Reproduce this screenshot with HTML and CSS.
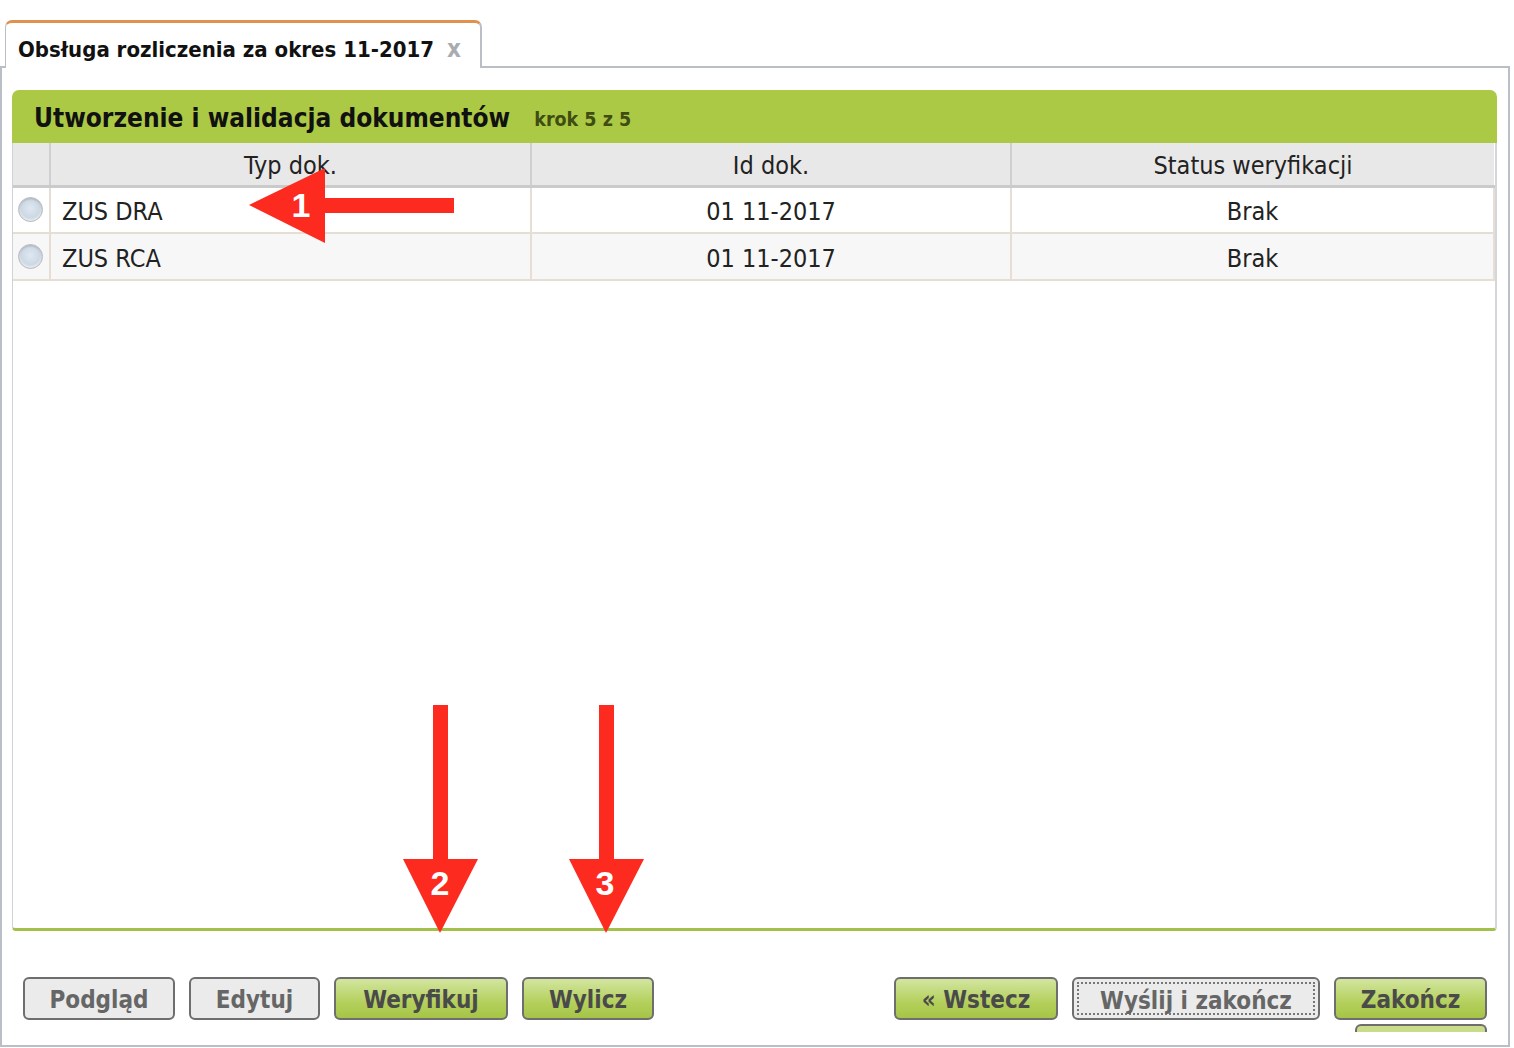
FILE: index.html
```html
<!DOCTYPE html>
<html lang="pl">
<head>
    <meta charset="UTF-8">
    <title>Obsługa rozliczenia</title>
    <link rel="stylesheet" href="styles.css">
</head>
<body>
    <!-- Tab strip -->
    <div class="tabs">
        <div class="tab">
            <span class="tab-title">Obsługa rozliczenia za okres 11-2017</span>
            <span class="tab-close">x</span>
        </div>
    </div>

    <div class="window">
        <div class="panel">
            <div class="panel-header">
                <h2>Utworzenie i walidacja dokumentów</h2>
                <span class="step">krok 5 z 5</span>
            </div>
            <div class="panel-body">
                <table class="grid">
                    <thead>
                        <tr>
                            <th class="col-radio"></th>
                            <th class="col-type">Typ dok.</th>
                            <th class="col-id">Id dok.</th>
                            <th class="col-status">Status weryfikacji</th>
                        </tr>
                    </thead>
                    <tbody>
                        <tr>
                            <td class="col-radio"><span class="radio"></span></td>
                            <td class="left">ZUS DRA</td>
                            <td>01 11-2017</td>
                            <td>Brak</td>
                        </tr>
                        <tr class="alt">
                            <td class="col-radio"><span class="radio"></span></td>
                            <td class="left">ZUS RCA</td>
                            <td>01 11-2017</td>
                            <td>Brak</td>
                        </tr>
                    </tbody>
                </table>
            </div>
        </div>

        <div class="actions">
            <div class="group">
                <button class="btn w-podglad">Podgląd</button>
                <button class="btn w-edytuj">Edytuj</button>
                <button class="btn green w-weryfikuj">Weryfikuj</button>
                <button class="btn green w-wylicz">Wylicz</button>
            </div>
            <div class="group">
                <button class="btn green w-wstecz">&laquo; Wstecz</button>
                <button class="btn focused w-wyslij"><span>Wyślij i zakończ</span></button>
                <div class="stack">
                    <button class="btn green w-zakoncz">Zakończ</button>
                    <div class="btn-shadow"></div>
                </div>
            </div>
        </div>
    </div>

    <!-- Annotation arrows drawn over the screenshot -->
    <svg class="annotations" width="1514" height="1048" viewBox="0 0 1514 1048">
        <g fill="#fc2a1f">
            <rect x="318" y="198" width="136" height="15"/>
            <polygon points="249,205 325,168 325,243"/>
            <rect x="433" y="705" width="15" height="160"/>
            <polygon points="403,859 478,859 440,933"/>
            <rect x="599" y="705" width="15" height="160"/>
            <polygon points="569,859 644,859 606,933"/>
        </g>
        <g class="num" fill="#fff">
            <text x="301" y="217">1</text>
            <text x="440" y="895">2</text>
            <text x="605" y="895">3</text>
        </g>
    </svg>
</body>
</html>
```

FILE: styles.css
```css
* {
    margin: 0;
    padding: 0;
    box-sizing: border-box;
}

body {
    font-family: "DejaVu Sans Condensed", "DejaVu Sans", sans-serif;
    background: #fff;
    color: #222;
    width: 1514px;
    height: 1048px;
    position: relative;
    overflow: hidden;
}

/* Tabs */
.tabs {
    height: 67px;
    padding: 20px 0 0 5px;
    display: flex;
    position: relative;
    z-index: 2;
}

.tab {
    width: 477px;
    height: 48px;
    background: #fff;
    border-top: 3px solid #e0914f;
    border-left: 1px solid #b9bec7;
    border-right: 2px solid #b9bec7;
    border-radius: 7px 7px 0 0;
    display: flex;
    align-items: center;
    padding: 7px 0 0 12px;
}

.tab-title {
    font-weight: bold;
    font-size: 22px;
    color: #111;
}

.tab-close {
    margin-left: 13px;
    font-weight: bold;
    font-size: 24px;
    color: #a8acb0;
}

/* Window */
.window {
    width: 1510px;
    height: 981px;
    border: 2px solid #b9bec7;
    margin-top: -1px;
    padding: 22px 0 0 10px;
}

.panel {
    width: 1485px;
    height: 841px;
    display: flex;
    flex-direction: column;
}

.panel-header {
    height: 53px;
    background: #abc945;
    border-radius: 7px 7px 0 0;
    display: flex;
    align-items: center;
    padding: 2px 0 0 22px;
}

.panel-header h2 {
    font-size: 26px;
    font-weight: bold;
    color: #111;
}

.step {
    margin-left: 24px;
    padding-top: 4px;
    font-size: 19.5px;
    font-weight: bold;
    color: #3f4d12;
}

.panel-body {
    flex: 1;
    background: #fff;
    border-left: 1px solid #cfd2d6;
    border-right: 2px solid #d4d6d9;
    border-bottom: 3px solid #a3c14a;
    border-radius: 0 0 4px 4px;
}

/* Grid */
.grid {
    width: 1482px;
    border-collapse: collapse;
    font-size: 25px;
}

.grid th {
    height: 43px;
    background: #e8e8e8;
    font-weight: normal;
    border-left: 2px solid #cfcfcf;
    border-bottom: 3px solid #cacaca;
    text-align: center;
    padding-top: 3px;
}

.grid th.col-radio {
    border-left: none;
}

.col-radio {
    width: 37px;
}

.col-type {
    width: 481px;
}

.col-id {
    width: 480px;
}

.grid td {
    height: 47px;
    border: 2px solid #e6ded4;
    border-top: none;
    text-align: center;
    padding-top: 3px;
}

.grid td.col-radio {
    border-left: none;
    text-align: left;
    padding: 0 0 0 5px;
}

.grid td.left {
    text-align: left;
    padding-left: 11px;
}

.grid tr.alt td {
    background: #f7f7f7;
}

.radio {
    display: block;
    width: 25px;
    height: 25px;
    border-radius: 50%;
    border: 1px solid #b9bcc0;
    background: radial-gradient(circle at 50% 45%, #dfe8f2 0, #ccd8e4 55%, #eef0f2 75%);
    box-shadow: inset 0 1px 2px rgba(0, 0, 0, 0.2);
}

/* Buttons */
.actions {
    display: flex;
    justify-content: space-between;
    padding: 46px 21px 0 11px;
}

.group {
    display: flex;
    gap: 14px;
    align-items: flex-start;
}

.btn {
    height: 43px;
    padding: 3px 0 0;
    font-family: "DejaVu Sans Condensed", "DejaVu Sans", sans-serif;
    font-size: 24px;
    font-weight: bold;
    white-space: nowrap;
    color: #666;
    background: #ebebeb;
    border: 2px solid #6e6e6e;
    border-radius: 6px;
    cursor: pointer;
}

.btn.green {
    color: #4a4a4a;
    background: linear-gradient(to bottom, #d3e5a0, #b4d05c 60%, #a6c447);
}

.w-podglad { width: 152px; }
.w-edytuj { width: 131px; }
.w-weryfikuj { width: 174px; }
.w-wylicz { width: 132px; }
.w-wstecz { width: 164px; }
.w-wyslij { width: 248px; }
.w-zakoncz { width: 153px; }

.btn.focused {
    padding: 3px;
}

.btn.focused span {
    display: block;
    height: 100%;
    border: 2px dotted #777;
    line-height: 31px;
    padding-top: 2px;
}

.stack {
    display: flex;
    flex-direction: column;
    align-items: flex-end;
}

.btn-shadow {
    width: 132px;
    height: 8px;
    margin-top: 4px;
    border: 2px solid #6e6e6e;
    border-bottom: none;
    border-radius: 6px 6px 0 0;
    background: #c8dc8a;
}

/* Annotations */
.annotations {
    position: absolute;
    left: 0;
    top: 0;
    pointer-events: none;
    z-index: 5;
}

.num text {
    font-family: "Liberation Sans", Arial, sans-serif;
    font-weight: bold;
    font-size: 34px;
    text-anchor: middle;
}
```
